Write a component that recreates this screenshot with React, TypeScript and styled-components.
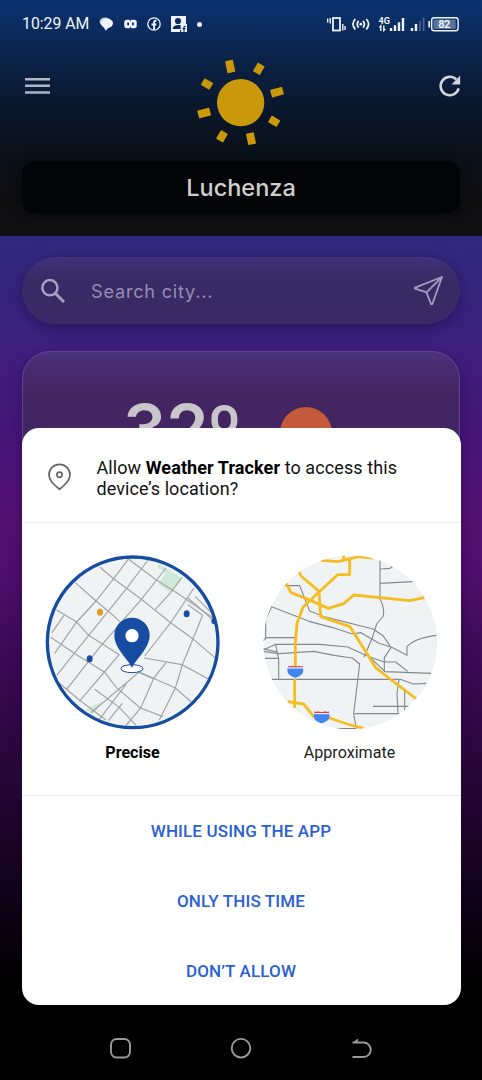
import React from 'react';
import styled, { createGlobalStyle } from 'styled-components';

const GlobalStyle = createGlobalStyle`
  * { box-sizing: border-box; }
  html, body { margin: 0; padding: 0; background: #000; }
  body { font-family: Roboto, "Liberation Sans", sans-serif; }
  svg { display: block; flex: none; }
`;

const Screen = styled.div`
  position: relative;
  width: 482px;
  height: 1080px;
  overflow: hidden;
  display: flex;
  flex-direction: column;
  background: #000;
`;

const Header = styled.header`
  height: 236px;
  flex: none;
  display: flex;
  flex-direction: column;
  background: linear-gradient(180deg, #0b3270 0px, #0b2a5a 35px, #0b1e3e 75px, #0a1526 120px, #0a1018 160px, #0e0e11 200px, #101013 236px);
`;

const StatusBar = styled.div`
  height: 48px;
  padding: 0 22px 0 22px;
  display: flex;
  align-items: center;
  justify-content: space-between;
  color: #eef3fb;
`;

const StatusGroup = styled.div`
  display: flex;
  align-items: center;
  gap: 10px;
`;

const Clock = styled.span`
  font-size: 15.8px;
  line-height: 20px;
  width: 67px;
  white-space: nowrap;
`;

const TopBar = styled.div`
  height: 113px;
  padding: 0 20px 0 25px;
  display: flex;
  align-items: flex-start;
  justify-content: space-between;
`;

const IconButton = styled.button<{ $top: number }>`
  margin: ${(p) => p.$top}px 0 0;
  padding: 0;
  border: 0;
  background: none;
  display: flex;
`;

const SunIcon = styled.svg`
  margin: 2px 9px 0 0;
`;

const CityName = styled.h1`
  margin: 0 22px;
  height: 53px;
  display: flex;
  align-items: center;
  justify-content: center;
  border-radius: 14px;
  background: #030405;
  box-shadow: 0 2px 12px 1px rgba(0, 0, 0, 0.35);
  color: #cfcfcf;
  font: 500 23.5px/30px Inter, "Open Sans", sans-serif;
`;

const Body = styled.main`
  flex: 1;
  min-height: 0;
  padding: 21px 22px 0;
  display: flex;
  flex-direction: column;
  gap: 27px;
  background: linear-gradient(180deg, #30297f 0px, #34257e 45px, #3e207f 110px, #43197b 165px, #4b1378 225px, #54106f 290px, #4c0e68 350px, #3d0a56 420px, #2d0740 500px, #1c042a 590px, #0a0110 690px, #000 750px);
`;

const SearchBar = styled.div`
  height: 67px;
  flex: none;
  padding: 0 17px 0 19px;
  display: flex;
  align-items: center;
  border-radius: 34px;
  background: linear-gradient(180deg, #41327b 0, #3b2d6c 14px, #382a64 26px, #392a66 67px);
  box-shadow: 0 4px 14px rgba(25, 5, 60, 0.5);
`;

const Placeholder = styled.span`
  flex: 1;
  margin-left: 26px;
  color: #978cb3;
  font: 400 18.2px/26px Inter, "Open Sans", sans-serif;
  letter-spacing: 0.75px;
`;

const WeatherCard = styled.section`
  height: 400px;
  flex: none;
  padding: 33px 0 0 100px;
  display: flex;
  align-items: flex-start;
  border: 1px solid #60458d;
  border-radius: 28px;
  background: linear-gradient(180deg, #4b327c 0, #472b70 18px, #432661 42px, #422561 80px);
  box-shadow: 0 4px 14px rgba(25, 5, 60, 0.45);
`;

const Temperature = styled.div`
  margin-top: 3px;
  width: 157px;
  display: flex;
  color: #c8c6ca;
  font: 600 68px/80px Inter, "Open Sans", sans-serif;
  white-space: nowrap;
`;

const Degree = styled.span`
  margin: 4px 0 0 -2px;
  font-size: 75px;
  line-height: 80px;
`;

const WeatherDot = styled.div`
  margin-top: 22px;
  width: 52px;
  height: 52px;
  border-radius: 50%;
  background: #c35a39;
`;

const Dialog = styled.div`
  position: absolute;
  left: 21.5px;
  top: 427.5px;
  width: 439px;
  height: 577.5px;
  border-radius: 17px;
  background: #fff;
  overflow: hidden;
  display: flex;
  flex-direction: column;
`;

const DialogTitle = styled.div`
  height: 95px;
  flex: none;
  padding: 29px 10px 0 26px;
  display: flex;
  gap: 26px;
  border-bottom: 1px solid #eeeff0;
  font-size: 18px;
  line-height: 21.5px;
  letter-spacing: 0.09px;
  white-space: nowrap;
  color: #111;
  svg { margin-top: 6px; }
  b { font-weight: 700; color: #000; }
`;

const Choices = styled.div`
  height: 273px;
  flex: none;
  padding: 23.5px 14px 0;
  display: flex;
  justify-content: space-between;
  border-bottom: 1px solid #e9eaec;
`;

const Choice = styled.div<{ $selected?: boolean }>`
  width: 194px;
  display: flex;
  flex-direction: column;
  align-items: center;
  gap: 2px;
  font-size: 16.1px;
  line-height: 22px;
  font-weight: ${(p) => (p.$selected ? 700 : 400)};
  color: ${(p) => (p.$selected ? '#000' : '#222')};
`;

const Actions = styled.div`
  padding-top: 1px;
  display: flex;
  flex-direction: column;
`;

const Action = styled.button`
  height: 69.7px;
  padding: 0;
  border: 0;
  background: none;
  color: #2a60d6;
  font: 500 17px/24px Roboto, sans-serif;
  letter-spacing: 0.14px;
`;

const NavBar = styled.nav`
  height: 64px;
  flex: none;
  padding: 0 109px;
  display: flex;
  align-items: center;
  justify-content: space-between;
  background: #000;
`;

const StatusLeft = () => (
  <StatusGroup>
    <Clock>10:29 AM</Clock>
    <svg width="15" height="14" viewBox="0 0 15 14" fill="#eef3fb">
      <ellipse cx="6" cy="4.8" rx="5.4" ry="4.3" fill="#c5d0e2" />
      <ellipse cx="8" cy="6.3" rx="6" ry="4.8" />
      <path d="M4 9l2.8 4.7L10 10z" />
    </svg>
    <svg width="13" height="10" viewBox="0 0 13 10">
      <rect width="12.4" height="8.4" x=".3" y=".8" rx="2.5" fill="#eef3fb" />
      <path d="M5 .5l1.500 1.500L8 .5zM5 9.600l1.500-1.800L8 9.600z" fill="#0b2d64" />
      <path d="M3.200 3.500h1.800v2.700H3.200zM8 3.500h1.800v2.700H8z" fill="#0b2d64" />
    </svg>
    <svg width="14" height="14" viewBox="0 0 14 14" fill="none" stroke="#eef3fb">
      <circle cx="7" cy="7" r="6.2" strokeWidth="1.3" />
      <path d="M7.1 13V5.6c0-1.4.6-2 2.4-1.8M4.6 7.5h4.7" strokeWidth="1.9" />
    </svg>
    <svg width="16" height="16" viewBox="0 0 16 16">
      <path d="M0 0h15v8h1v8H0z" fill="#eef3fb" />
      <circle cx="7" cy="5" r="3.1" fill="#0b2d64" />
      <path d="M1.7 13c.3-3 2.4-4 5.3-4 1 0 2 .1 2.7.5V13z" fill="#0b2d64" />
      <path d="M10 8h5.5v8H10z" fill="#eef3fb" />
      <path d="M13 16v-4.5c0-1 .4-1.4 1.8-1.3M11.5 12.6h3M9.6 14v2" stroke="#0b2d64" strokeWidth="1.1" fill="none" />
    </svg>
    <svg width="5" height="5" viewBox="0 0 5 5"><circle cx="2.5" cy="2.5" r="2.5" fill="#eef3fb" /></svg>
  </StatusGroup>
);

const StatusRight = () => (
  <svg width="134" height="18" viewBox="0 0 134 18" fill="none" stroke="#eef3fb">
    <rect x="7" y="3" width="7" height="12.5" strokeWidth="1.8" />
    <path d="M1.7 3.5v4M4.3 3v5.5M16.8 9v6.5M19 11v4" strokeWidth="1.4" />
    <g strokeWidth="1.8">
      <path d="M29.3 4q-4.6 5 0 10.5M32.6 5.8q-2.8 3.3 0 6.8M37 5.8q2.8 3.3 0 6.8M40.3 4q4.6 5 0 10.5" />
    </g>
    <circle cx="34.8" cy="9.2" r="1.4" fill="#eef3fb" stroke="none" />
    <text x="52.5" y="9" fontSize="9" fontWeight="700" fill="#eef3fb" stroke="none" fontFamily="Roboto" textLength="11.5" lengthAdjust="spacingAndGlyphs">4G</text>
    <path d="M54.8 16v-5l-1.3 1.5M57.8 10.5v5l1.5-1.5" strokeWidth="1.4" />
    <path d="M65 13v3M69 10.2V16M73 7.3V16M77 3v13" strokeWidth="2.4" />
    <path d="M86 13v3M90 9V16" strokeWidth="2.4" />
    <path d="M94 6v10M97.6 2.5V16" strokeWidth="1.7" stroke="#4a6594" />
    <rect x="105.7" y="2.8" width="26.4" height="13" rx="2.5" strokeWidth="1.4" />
    <rect x="107.5" y="4.6" width="22.2" height="9.4" rx="1" fill="#5a73a1" stroke="none" />
    <path d="M103.2 6v6.5" strokeWidth="1.7" />
    <text x="112.3" y="13.2" fontSize="11" fontWeight="700" fill="#eef3fb" stroke="none" fontFamily="Roboto" textLength="12">82</text>
  </svg>
);

const sunRays: [number, number, number, number][] = [
  [150.5, 49.5, 24, 37],
  [236.5, 56.5, 24, 30],
  [291, 126.5, 24, 37],
  [282.5, 214, 23, 30],
  [213, 266, 24, 35],
  [126, 259, 24, 30],
  [72.5, 189, 24, 37],
  [81, 102, 23, 30],
];
const rayAngles = [-12, 30, 75, 120, 168, 210, 255, 300];

const Sun = () => (
  <SunIcon width="120" height="110" viewBox="0 0 360 330" fill="#c9990b">
    <circle cx="182" cy="158" r="71" />
    {sunRays.map(([x, y, w, h], i) => (
      <rect key={i} x={x - w / 2} y={y - h / 2} width={w} height={h} rx="2" transform={`rotate(${rayAngles[i]} ${x} ${y})`} />
    ))}
  </SunIcon>
);

const PreciseMap = () => (
  <svg width="194" height="194" viewBox="0 0 582 582">
    <defs><clipPath id="precise"><circle cx="290" cy="289" r="258" /></clipPath></defs>
    <circle cx="290" cy="289" r="256" fill="#f0f3f3" />
    <g clipPath="url(#precise)">
      <path d="M366 52l62 38 8 12-32 38-36-26 22-34-24-14z" fill="#cfe8d9" />
      <path d="M148 492l30-17 22-6-26 34z" fill="#cfe8d9" />
      <g fill="none" stroke="#a2a4a6" strokeWidth="3.6">
        <path d="M278 38L233 98 180 165 122 228 56 322M336 42L272 127 158 268 62 388M390 66L316 160 190 305 92 430M438 94L404 140 358 190M250 325L205 378 130 466M474 126L404 230 326 330M312 376L165 500M270 415L190 520M352 400l-38 86-50 60M259 472l-42 52M84 208l-36 52" />
        <path d="M278 40l80 60 66 42 120 82M192 64l41 34 83 62 88 70 66 48 70 60M118 110l62 55 36 30 36 32M62 192l60 36 36 40 92 58M44 274l74 50 87 54 36 46 72 62 68 26M70 412l60 50 80 60M176 430l74 54 50 54" />
        <path d="M324 336l114 20 78 42M390 350l-38 48-92-40M310 378l108 48 48 42M500 208l-60 146-22 72-48 96M456 156l84 74M478 152l54 54M500 208l-44-32" />
      </g>
      <ellipse cx="192" cy="199" rx="9" ry="10.5" fill="#e79a1b" />
      <ellipse cx="452" cy="203" rx="9" ry="10.5" fill="#174ca3" />
      <ellipse cx="161" cy="338" rx="9" ry="10.5" fill="#174ca3" />
      <circle cx="536" cy="225" r="10" fill="#174ca3" />
    </g>
    <circle cx="290" cy="289" r="256" fill="none" stroke="#174ca3" strokeWidth="10" />
    <ellipse cx="288" cy="368" rx="33" ry="12" fill="#fff" stroke="#174ca3" strokeWidth="3" />
    <path d="M288 366c-8-22-53-58-53-98a53 53 0 01106 0c0 40-45 76-53 98z" fill="#174ca3" />
    <circle cx="288" cy="269" r="20" fill="#fff" />
  </svg>
);

const Shield = ({ x, y }: { x: number; y: number }) => (
  <g transform={`translate(${x} ${y})`}>
    <path d="M-24-4q2-6 2-7h44q0 1 2 7c0 15-10 19-24 24-14-5-24-9-24-24z" fill="#4385f0" />
    <path d="M-22-16q5 3 11 0q11 4 22 0q6 3 11 0v5h-44z" fill="#d9403a" />
    <path d="M-22-9h44" stroke="#fff" strokeWidth="3" />
  </g>
);

const ApproximateMap = () => (
  <svg width="194" height="194" viewBox="0 0 582 582">
    <defs><clipPath id="approx"><circle cx="292" cy="289" r="261" /></clipPath></defs>
    <g clipPath="url(#approx)">
      <circle cx="292" cy="289" r="261" fill="#f0f3f3" />
      <g fill="none" stroke="#85898d" strokeWidth="3.4" strokeLinejoin="round">
        <path d="M381 30v128q14 26 10 52l-20 24-12 38-26 62M381 69l30-2 7-5M381 112l98-5" />
        <path d="M96 119h44l30 76 40 16 150 38 30 20 24 36-20 30v42M38 280v-60l18-38 112 44 68 18 62 20 26-4 54 32 38 12 46 24v-26q24-26 88-34" />
        <path d="M30 284l10-9h88M30 312l38-17h132l84 8 66 30 46 44 138 5M30 316l48 7 104-7 62 12 54 8 22 18-18 150 8 44" />
        <path d="M68 295l9 45v60M36 337h41M56 400h386M30 308l42 10M348 332l46 16h34l36 28M304 503h134M360 481h106M438 400l-6 42 3 62M455 428v64M442 400l38 14 40-2M250 548h60" />
      </g>
      <g fill="none" stroke="#f5bd22" strokeWidth="8.5" strokeLinejoin="round">
        <path d="M204 43l50 4 64-15 42 4M272 28v16M290 40v46h-36l-56 52-48 46-18 48-5 60v98M125 400v86" />
        <path d="M139 78l5 12 54 46 5 76 88 30 54 86 22 36 48 38 74 56M100 112l14 28 46 18 66 29 46-14 30-26 168 17 44-9" />
        <path d="M104 467l48 7 30 38 48 4 52 18 50 13" />
      </g>
      <Shield x={127} y={375} />
      <Shield x={206} y={512} />
    </g>
  </svg>
);

export default function App() {
  return (
    <Screen>
      <GlobalStyle />
      <Header>
        <StatusBar>
          <StatusLeft />
          <StatusRight />
        </StatusBar>
        <TopBar>
          <IconButton $top={29} aria-label="Menu">
            <svg width="25" height="18" viewBox="0 0 25 18" stroke="#b0b4c4" strokeWidth="2.5">
              <path d="M0 2.2h25M0 8.8h25M0 15.5h25" />
            </svg>
          </IconButton>
          <Sun />
          <IconButton $top={26} aria-label="Refresh">
            <svg width="24" height="24" viewBox="0 0 24 24" fill="none" stroke="#d0d3da" strokeWidth="2.6">
              <path d="M20.7 14.4A9.2 9.2 0 1 1 18.4 5.6" />
              <path d="M22.2 1.5v9H13.5z" fill="#d0d3da" stroke="none" />
            </svg>
          </IconButton>
        </TopBar>
        <CityName>Luchenza</CityName>
      </Header>
      <Body>
        <SearchBar>
          <svg width="24" height="24" viewBox="0 0 24 24" fill="none" stroke="#a89fc3" strokeWidth="2.5">
            <circle cx="8.9" cy="8.7" r="7.6" />
            <path d="M14 14l9 9" strokeWidth="3" />
          </svg>
          <Placeholder>Search city...</Placeholder>
          <svg width="29" height="29" viewBox="0 0 29 29" fill="none" stroke="#a59cc0" strokeWidth="1.8" strokeLinejoin="round">
            <path d="M28 1L1 11.6q-.7.5 0 1l11.5 3.8L17 28q.6.6 1.3 0z" />
            <path d="M28 1L12.5 16.4" />
          </svg>
        </SearchBar>
        <WeatherCard>
          <Temperature>32<Degree>º</Degree></Temperature>
          <WeatherDot />
        </WeatherCard>
      </Body>
      <NavBar>
        <svg width="23" height="23" viewBox="0 0 23 23" fill="none" stroke="#9a9a9a" strokeWidth="1.9">
          <rect x="2" y="2" width="19" height="18.5" rx="5.5" />
        </svg>
        <svg width="23" height="23" viewBox="0 0 23 23" fill="none" stroke="#9a9a9a" strokeWidth="1.9">
          <circle cx="11" cy="11.2" r="9.3" />
        </svg>
        <svg width="23" height="23" viewBox="0 0 23 23" fill="none" stroke="#9a9a9a" strokeWidth="1.9">
          <path d="M8 2.6L4.5 5.5M2.500 5.500H13.500a7.250 7.250 0 0 1 0 14.500H2.500" />
        </svg>
      </NavBar>
      <Dialog role="dialog">
        <DialogTitle>
          <svg width="23" height="28" viewBox="0 0 23 28" fill="none" stroke="#666" strokeWidth="1.7">
            <path d="M11.5 26.3C6 21.5 1 17.5 1 11.8a10.5 10.5 0 0 1 21 0c0 5.7-5 9.7-10.5 14.5z" strokeLinejoin="round" />
            <circle cx="11.5" cy="11.8" r="2.6" />
          </svg>
          <div>Allow <b>Weather Tracker</b> to access this<br />device’s location?</div>
        </DialogTitle>
        <Choices>
          <Choice $selected><PreciseMap />Precise</Choice>
          <Choice><ApproximateMap />Approximate</Choice>
        </Choices>
        <Actions>
          <Action>WHILE USING THE APP</Action>
          <Action>ONLY THIS TIME</Action>
          <Action>DON’T ALLOW</Action>
        </Actions>
      </Dialog>
    </Screen>
  );
}
